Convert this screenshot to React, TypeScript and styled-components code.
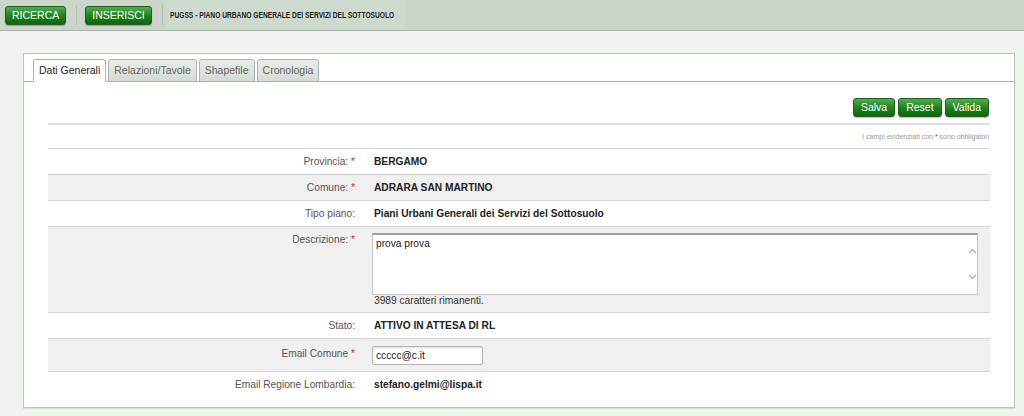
import React from 'react';
import styled, { createGlobalStyle } from 'styled-components';

const GlobalStyle = createGlobalStyle`
  body {
    margin: 0;
    background-color: #edf5ec;
    font-family: 'Liberation Sans', Arial, sans-serif;
  }
`;

const Page = styled.div`
  width: 1024px;
  height: 416px;
  overflow: hidden;
`;

const TopBar = styled.header`
  display: flex;
  align-items: center;
  height: 30px;
  padding-left: 5px;
  background-color: #c9d6c9;
  border-bottom: 1px solid #a7b3a7;
`;

const GreenBtn = styled.button<{ $small?: boolean }>`
  height: 19px;
  padding: 0 ${(p) => (p.$small ? '7px' : '6px')};
  border: 1px solid #1f5e1f;
  border-radius: 3px;
  background: linear-gradient(#53ad53, #1d801d 55%, #0b690b);
  box-shadow: 0 1px 1px rgba(0, 0, 0, 0.25);
  color: #fff;
  font-family: 'Liberation Sans', Arial, sans-serif;
  font-size: 10.5px;
  line-height: 17px;
  cursor: pointer;
`;

const BarSep = styled.span`
  width: 1px;
  height: 20px;
  margin: 0 8px 0 10px;
  background-color: #b3c0b3;
`;

const BarTitle = styled.div`
  display: flex;
  align-items: center;
  width: 235px;
  height: 30px;
  margin-left: -5px;
  padding-left: 4px;
  background-color: #cfdacf;
`;

const TitleText = styled.span`
  display: inline-block;
  white-space: nowrap;
  color: #222;
  font-size: 9px;
  font-weight: 700;
  transform: scaleX(0.74);
  transform-origin: left center;
`;

const Main = styled.main`
  padding: 22px 9px 0 23px;
`;

const Panel = styled.section`
  height: 353px;
  border: 1px solid #b9c3b9;
  background-color: #fff;
  box-shadow: 0 1px 1px rgba(0, 0, 0, 0.08);
`;

const TabStrip = styled.ul`
  display: flex;
  gap: 2px;
  margin: 0;
  padding: 5px 0 0 9px;
  list-style: none;
  border-bottom: 1px solid #abb4ab;
`;

const Tab = styled.li<{ $active?: boolean }>`
  height: 21px;
  margin-bottom: -1px;
  padding: 0 5px;
  border: 1px solid #abb4ab;
  border-bottom-color: ${(p) => (p.$active ? '#fff' : '#abb4ab')};
  border-radius: 3px 3px 0 0;
  background: ${(p) => (p.$active ? '#fff' : 'linear-gradient(#e9ede9, #d3dad3)')};
  color: ${(p) => (p.$active ? '#222' : '#666')};
  font-size: 10.5px;
  line-height: 21px;
`;

const Content = styled.div`
  padding: 0 24px;
`;

const Toolbar = styled.div`
  display: flex;
  justify-content: flex-end;
  gap: 3px;
  padding: 16px 1px 6px 0;
  border-bottom: 2px solid #dedede;
`;

const Note = styled.div`
  height: 23px;
  padding-right: 1px;
  border-bottom: 1px solid #d4d4d4;
  color: #999;
  font-size: 7px;
  line-height: 24px;
  text-align: right;
`;

const Req = styled.span`
  color: #d42020;
`;

const Row = styled.div<{ $shade?: boolean; $last?: boolean }>`
  display: grid;
  grid-template-columns: 307px 1fr;
  column-gap: 17px;
  align-items: start;
  padding: 6px 0;
  border-bottom: ${(p) => (p.$last ? 'none' : '1px solid #d2d2d2')};
  background-color: ${(p) => (p.$shade ? '#f0f0f0' : '#fff')};
  line-height: 13px;
`;

const Label = styled.div<{ $pad?: number }>`
  padding-top: ${(p) => p.$pad ?? 0}px;
  color: #555;
  font-size: 10.2px;
  text-align: right;
`;

const Value = styled.div<{ $plain?: boolean }>`
  padding-left: 2px;
  color: #222;
  font-size: 10.2px;
  font-weight: ${(p) => (p.$plain ? 400 : 700)};
`;

const AreaBox = styled.div`
  display: flex;
  width: 604px;
  height: 59px;
  margin-left: -2px;
  border: 1px solid #c4c4c4;
  border-top: 2px solid #a0a0a0;
  background-color: #fff;
`;

const AreaText = styled.div`
  flex: 1;
  padding: 2px 3px;
  color: #222;
  font-size: 10.2px;
`;

const ScrollGutter = styled.div`
  display: flex;
  flex-direction: column;
  justify-content: space-between;
  align-items: center;
  width: 9px;
  padding: 13px 0 14px;
`;

const Counter = styled.div`
  color: #333;
  font-size: 10.2px;
  line-height: 11px;
`;

const EmailInput = styled.input`
  box-sizing: border-box;
  width: 111px;
  height: 19px;
  margin: 1px 0 0 -2px;
  padding: 0 3px;
  border: 1px solid #b4b4b4;
  border-radius: 2px;
  box-shadow: inset 0 1px 2px rgba(0, 0, 0, 0.15);
  color: #222;
  font-family: 'Liberation Sans', Arial, sans-serif;
  font-size: 10.2px;
`;

const Chevron = ({ up }: { up?: boolean }) => (
  <svg width="9" height="6" viewBox="0 0 9 6">
    <path
      d={up ? 'M1 5 L4.5 1.5 L8 5' : 'M1 1 L4.5 4.5 L8 1'}
      fill="none"
      stroke="#a8a8a8"
      strokeWidth="1.1"
    />
  </svg>
);

const App = () => {
  return (
    <Page>
      <GlobalStyle />
      <TopBar>
        <GreenBtn>RICERCA</GreenBtn>
        <BarSep />
        <GreenBtn>INSERISCI</GreenBtn>
        <BarSep />
        <BarTitle>
          <TitleText>PUGSS - PIANO URBANO GENERALE DEI SERVIZI DEL SOTTOSUOLO</TitleText>
        </BarTitle>
      </TopBar>
      <Main>
        <Panel>
          <TabStrip>
            <Tab $active>Dati Generali</Tab>
            <Tab>Relazioni/Tavole</Tab>
            <Tab>Shapefile</Tab>
            <Tab>Cronologia</Tab>
          </TabStrip>
          <Content>
            <Toolbar>
              <GreenBtn $small>Salva</GreenBtn>
              <GreenBtn $small>Reset</GreenBtn>
              <GreenBtn $small>Valida</GreenBtn>
            </Toolbar>
            <Note>
              I campi evidenziati con <Req>*</Req> sono obbligatori
            </Note>
            <Row>
              <Label>
                Provincia: <Req>*</Req>
              </Label>
              <Value>BERGAMO</Value>
            </Row>
            <Row $shade>
              <Label>
                Comune: <Req>*</Req>
              </Label>
              <Value>ADRARA SAN MARTINO</Value>
            </Row>
            <Row>
              <Label>Tipo piano:</Label>
              <Value>Piani Urbani Generali dei Servizi del Sottosuolo</Value>
            </Row>
            <Row $shade>
              <Label>
                Descrizione: <Req>*</Req>
              </Label>
              <Value $plain>
                <AreaBox>
                  <AreaText>prova prova</AreaText>
                  <ScrollGutter>
                    <Chevron up />
                    <Chevron />
                  </ScrollGutter>
                </AreaBox>
                <Counter>3989 caratteri rimanenti.</Counter>
              </Value>
            </Row>
            <Row>
              <Label>Stato:</Label>
              <Value>ATTIVO IN ATTESA DI RL</Value>
            </Row>
            <Row $shade>
              <Label $pad={2}>
                Email Comune <Req>*</Req>
              </Label>
              <Value $plain>
                <EmailInput defaultValue="ccccc@c.it" />
              </Value>
            </Row>
            <Row $last>
              <Label>Email Regione Lombardia:</Label>
              <Value>stefano.gelmi@lispa.it</Value>
            </Row>
          </Content>
        </Panel>
      </Main>
    </Page>
  );
};

export default App;
